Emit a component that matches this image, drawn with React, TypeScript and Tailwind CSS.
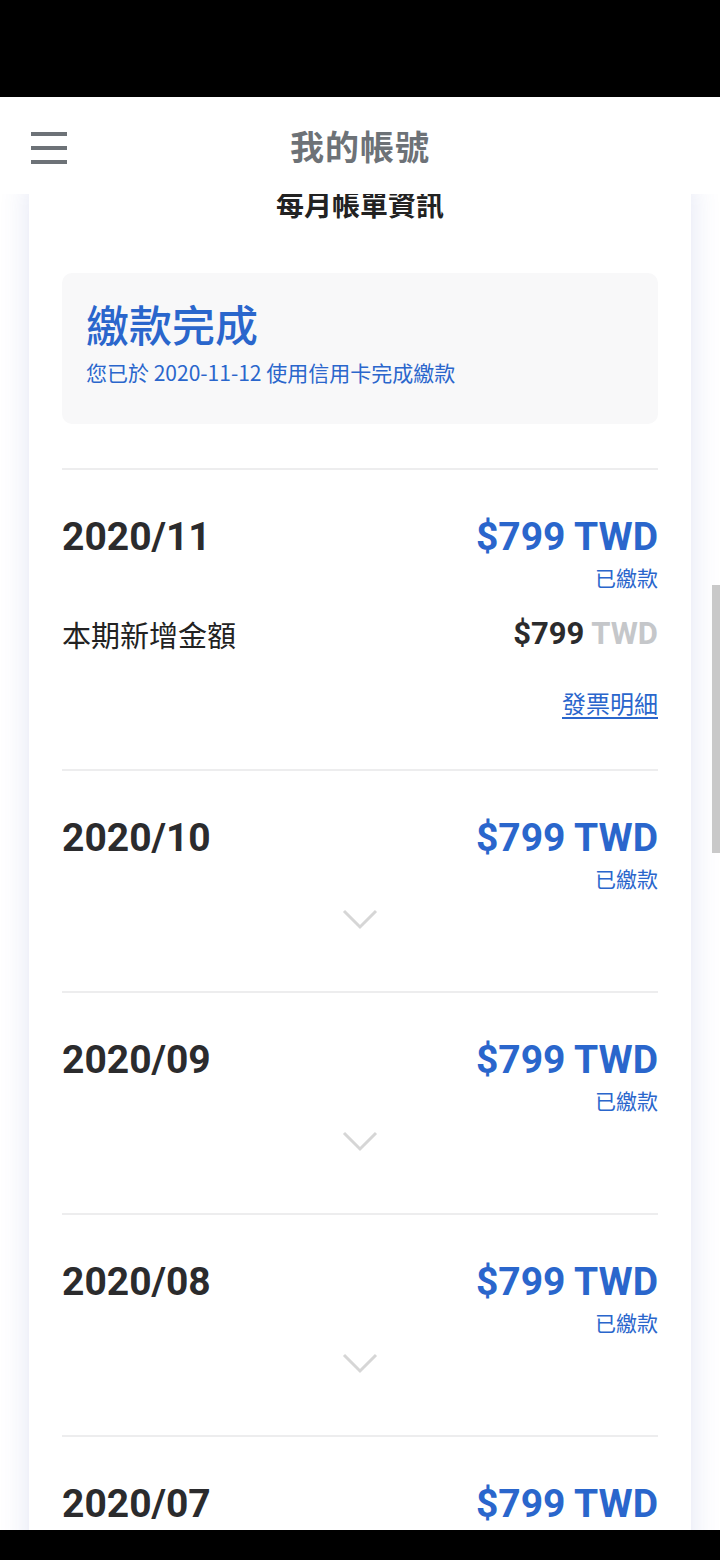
const months = ['2020/10', '2020/09', '2020/08', '2020/07']

const cjk = "font-['Noto_Sans_CJK_TC','Noto_Sans',sans-serif]"
const num = "font-['Roboto','Noto_Sans_CJK_TC',sans-serif]"

function Chevron() {
  return (
    <svg width="36" height="22" viewBox="0 0 36 22" className="block">
      <polyline points="2,3 18,19 34,3" fill="none" stroke="#d6d6d6" strokeWidth="3" />
    </svg>
  )
}

function RowHead({ month }: { month: string }) {
  return (
    <>
      <div className="flex items-center justify-between">
        <span className={`${num} text-[39px] leading-[48px] font-bold text-[#2b2b2d]`}>{month}</span>
        <span className={`${num} text-[39px] leading-[48px] font-bold text-[#2a66cc]`}>$799 TWD</span>
      </div>
      <div className={`${cjk} mt-[2px] text-right text-[21px] leading-[28px] text-[#2a66cc]`}>已繳款</div>
    </>
  )
}

export default function App() {
  return (
    <div className="relative w-[720px] h-[1560px] overflow-hidden bg-white">
      <div className="h-[97px] bg-black" />
      <header className="relative z-10 h-[97px] bg-white flex items-center justify-center">
        <div className="absolute left-[31px] top-[35px] flex flex-col gap-[10px]">
          <div className="w-[36px] h-[4px] bg-[#6d7277]" />
          <div className="w-[36px] h-[4px] bg-[#6d7277]" />
          <div className="w-[36px] h-[4px] bg-[#6d7277]" />
        </div>
        <h1 className={`${cjk} text-[34px] font-bold text-[#6d7277] tracking-[1px]`}>我的帳號</h1>
      </header>

      <main className="-mt-[12px] px-[29px]">
        <section className="bg-white shadow-[0_0_28px_rgba(70,90,180,0.16)] px-[33px] pt-[4px]">
          <h2 className={`${cjk} text-center text-[28px] leading-[36px] font-bold text-[#222]`}>每月帳單資訊</h2>

          <div className="mt-[51px] rounded-[10px] bg-[#f8f8f9] px-[24px] pt-[25px] pb-[38px]">
            <div className={`${cjk} text-[43px] leading-[50px] font-medium text-[#2a66cc]`}>繳款完成</div>
            <div className={`${cjk} mt-[10px] text-[21px] leading-[28px] text-[#2a66cc]`}>
              您已於 2020-11-12 使用信用卡完成繳款
            </div>
          </div>

          <div className="mt-[44px] border-t-2 border-[#ededee] pt-[43px] pb-[50px]">
            <RowHead month="2020/11" />
            <div className="mt-[26px] flex items-center justify-between">
              <span className={`${cjk} text-[29px] leading-[34px] text-[#222]`}>本期新增金額</span>
              <span className={`${num} text-[31px] leading-[34px] font-bold`}>
                <span className="text-[#2b2b2d]">$799</span> <span className="text-[#c5c7ca]">TWD</span>
              </span>
            </div>
            <div className="mt-[36px] flex justify-end">
              <a className={`${cjk} text-[24px] leading-[32px] text-[#2a66cc] underline underline-offset-[4px]`}>發票明細</a>
            </div>
          </div>

          {months.map((m) => (
            <div key={m} className="border-t-2 border-[#ededee] pt-[43px] pb-[61px]">
              <RowHead month={m} />
              <div className="mt-[16px] flex justify-center">
                <Chevron />
              </div>
            </div>
          ))}
        </section>
      </main>

      <div className="absolute right-0 top-[585px] w-[8px] h-[268px] bg-[#c9c9c9]" />
      <div className="absolute left-0 bottom-0 w-full h-[30px] bg-black" />
    </div>
  )
}
